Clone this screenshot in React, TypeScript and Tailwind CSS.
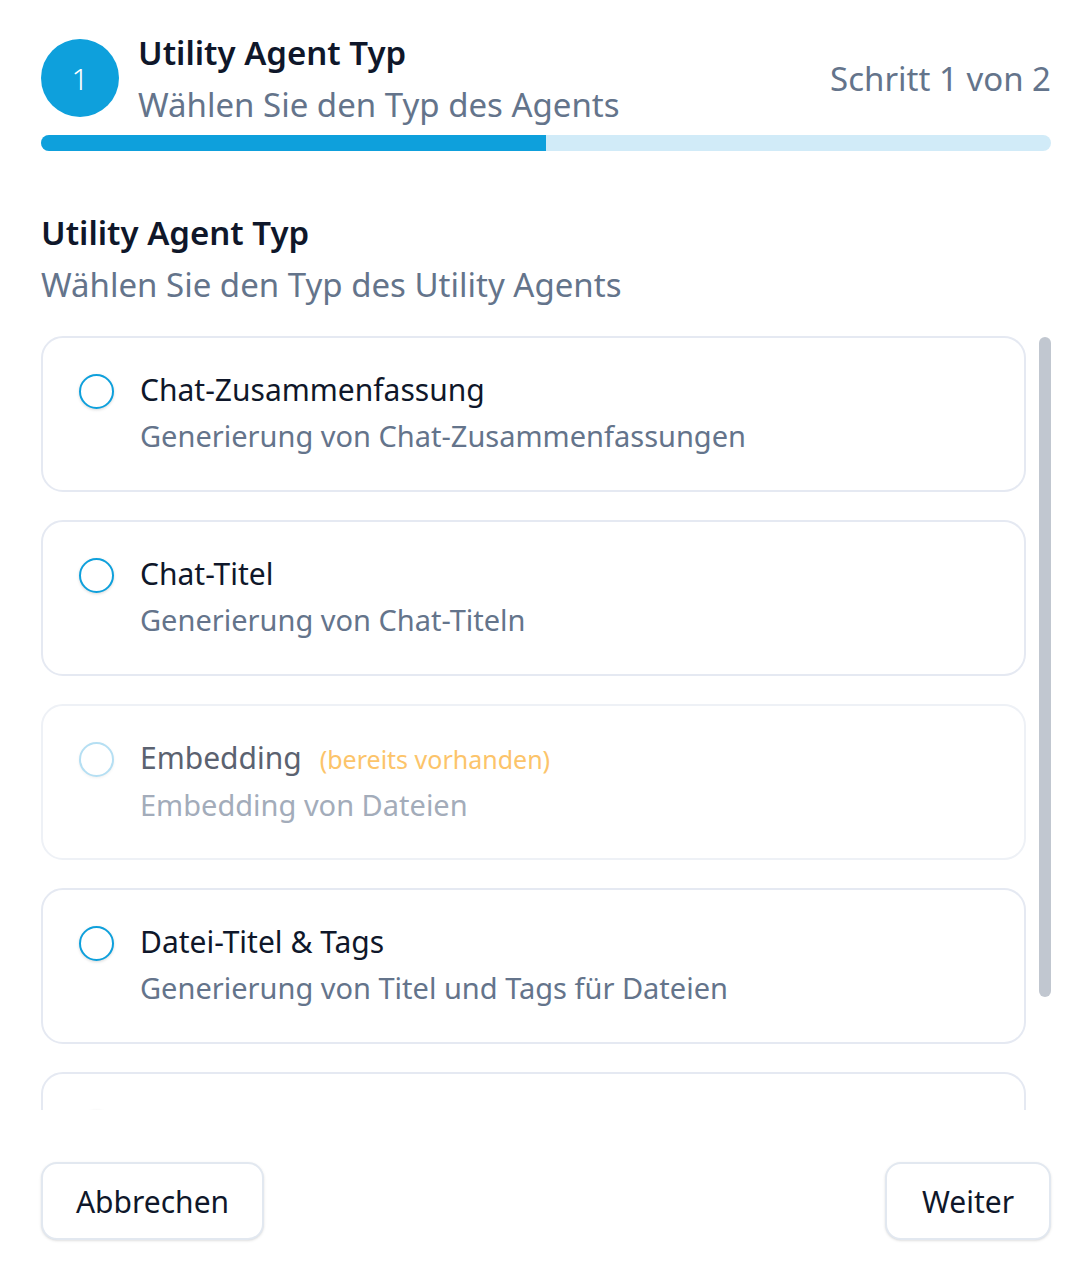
import React from 'react';

type Option = {
  id: string;
  title: string;
  description: string;
  disabled?: boolean;
  note?: string;
};

const options: Option[] = [
  { id: 'summary', title: 'Chat-Zusammenfassung', description: 'Generierung von Chat-Zusammenfassungen' },
  { id: 'title', title: 'Chat-Titel', description: 'Generierung von Chat-Titeln' },
  { id: 'embedding', title: 'Embedding', description: 'Embedding von Dateien', disabled: true, note: '(bereits vorhanden)' },
  { id: 'tags', title: 'Datei-Titel & Tags', description: 'Generierung von Titel und Tags für Dateien' },
  { id: 'more', title: 'Bildbeschreibung', description: 'Generierung von Bildbeschreibungen' },
];

const font = { fontFamily: '"Noto Sans", Roboto, sans-serif' };

export default function App() {
  return (
    <div className="h-[1281px] bg-white flex flex-col pl-[41px] pr-[37px] text-[#0f172a]" style={font}>
      {/* Header */}
      <div className="flex items-start pt-[39px]">
        <div className="w-[78px] h-[78px] rounded-full bg-[#0ea0dc] text-white flex items-center justify-center text-[30px] font-light">
          1
        </div>
        <div className="ml-[19px] flex-1 -mt-[6px]">
          <h1 className="text-[33px] font-semibold leading-[40px]">Utility Agent Typ</h1>
          <p className="text-[33px] leading-[40px] mt-[12px] text-[#64748b]">Wählen Sie den Typ des Agents</p>
        </div>
        <div className="text-[33px] leading-[40px] text-[#64748b] mt-[20px]">Schritt 1 von 2</div>
      </div>
      <div className="mt-[10px] h-[16px] rounded-full bg-[#d1ebf8] overflow-hidden">
        <div className="h-full w-1/2 bg-[#0ea0dc]" />
      </div>

      {/* Section */}
      <h2 className="mt-[62px] text-[33px] font-semibold leading-[40px]">Utility Agent Typ</h2>
      <p className="mt-[12px] text-[33px] leading-[40px] text-[#64748b]">Wählen Sie den Typ des Utility Agents</p>

      <div className="mt-[31px] h-[774px] flex gap-[13px]">
        <div className="flex-1 overflow-hidden flex flex-col gap-[28px]">
          {options.map((o) => (
            <div
              key={o.id}
              className={`shrink-0 h-[156px] rounded-[22px] border-2 bg-white flex items-start pl-[36px] pt-[36px] ${o.disabled ? 'border-[#eef1f6]' : 'border-[#e5e9f2]'}`}
            >
              <div
                className={`w-[35px] h-[35px] rounded-full border-2 bg-white shrink-0 ${o.disabled ? 'border-[#b5dff3] shadow-[0_1px_3px_rgba(0,0,0,0.06)]' : 'border-[#0ea0dc] shadow-[0_1px_3px_rgba(0,0,0,0.15)]'}`}
              />
              <div className="ml-[26px] -mt-[4px]">
                <div className="flex items-baseline gap-[18px]">
                  <span className={`text-[30px] leading-[40px] ${o.disabled ? 'text-[#5b6270]' : 'text-[#0f172a]'}`}>{o.title}</span>
                  {o.note && <span className="text-[25px] text-[#fcc46a]">{o.note}</span>}
                </div>
                <div className={`mt-[6px] text-[29px] leading-[40px] ${o.disabled ? 'text-[#a3acba]' : 'text-[#64748b]'}`}>{o.description}</div>
              </div>
            </div>
          ))}
        </div>
        <div className="w-[12px] pt-[1px]">
          <div className="h-[660px] rounded-full bg-[#c1c7d0]" />
        </div>
      </div>

      {/* Footer */}
      <div className="mt-[52px] flex justify-between">
        <button className="h-[78px] w-[223px] rounded-[16px] border-2 border-[#e2e8f0] bg-white shadow-sm text-[30px] text-[#0f172a]">
          Abbrechen
        </button>
        <button className="h-[78px] w-[166px] rounded-[16px] border-2 border-[#e2e8f0] bg-white shadow-sm text-[30px] text-[#0f172a]">
          Weiter
        </button>
      </div>
    </div>
  );
}
